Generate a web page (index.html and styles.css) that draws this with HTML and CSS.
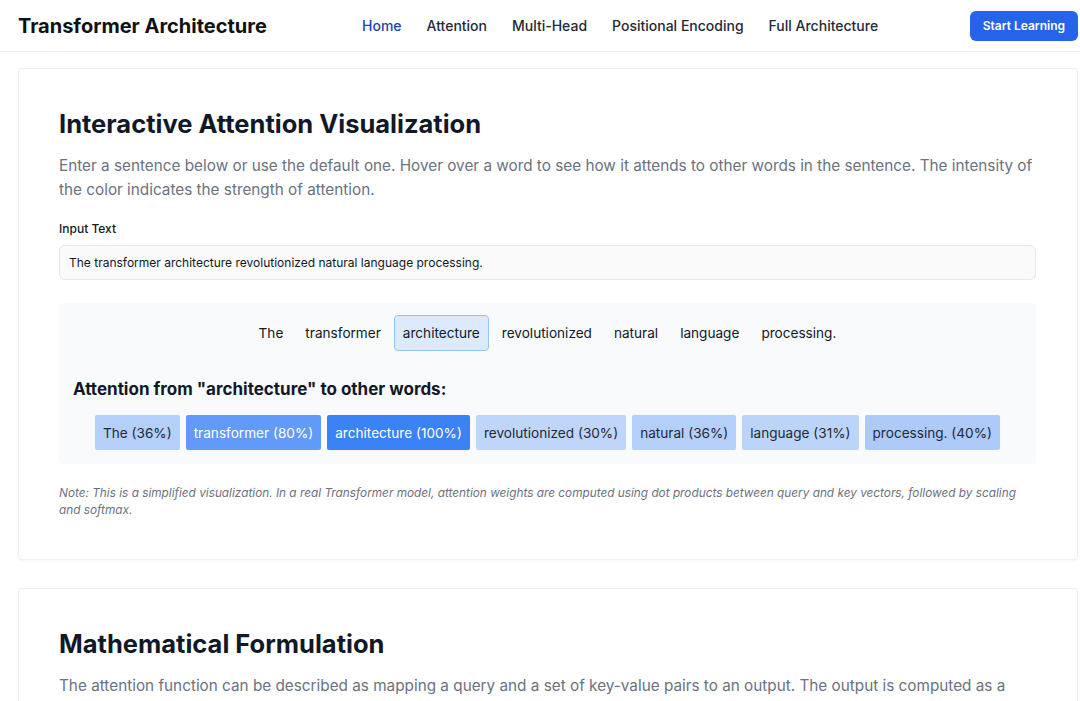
FILE: index.html
```html
<!DOCTYPE html>
<html lang="en">
<head>
    <meta charset="UTF-8">
    <meta name="viewport" content="width=device-width, initial-scale=1.0">
    <title>Transformer Architecture</title>
    <link rel="stylesheet" href="styles.css">
</head>
<body>
    <header class="site-header">
        <div class="brand">Transformer Architecture</div>
        <nav class="nav">
            <a href="#" class="active">Home</a>
            <a href="#">Attention</a>
            <a href="#">Multi-Head</a>
            <a href="#">Positional Encoding</a>
            <a href="#">Full Architecture</a>
        </nav>
        <button class="cta">Start Learning</button>
    </header>

    <main class="page">
        <section class="card">
            <h2>Interactive Attention Visualization</h2>
            <p class="lead">Enter a sentence below or use the default one. Hover over a word to see how it attends to other words in the sentence. The intensity of the color indicates the strength of attention.</p>

            <label for="sentence" class="field-label">Input Text</label>
            <input type="text" id="sentence" class="text-input" value="The transformer architecture revolutionized natural language processing.">

            <div class="viz">
                <div class="words">
                    <span class="word">The</span>
                    <span class="word">transformer</span>
                    <span class="word selected">architecture</span>
                    <span class="word">revolutionized</span>
                    <span class="word">natural</span>
                    <span class="word">language</span>
                    <span class="word">processing.</span>
                </div>
                <h3>Attention from "architecture" to other words:</h3>
                <div class="weights">
                    <span class="weight" style="background: rgba(59, 130, 246, 0.36)">The (36%)</span>
                    <span class="weight light" style="background: rgba(59, 130, 246, 0.8)">transformer (80%)</span>
                    <span class="weight light" style="background: rgba(59, 130, 246, 1)">architecture (100%)</span>
                    <span class="weight" style="background: rgba(59, 130, 246, 0.3)">revolutionized (30%)</span>
                    <span class="weight" style="background: rgba(59, 130, 246, 0.36)">natural (36%)</span>
                    <span class="weight" style="background: rgba(59, 130, 246, 0.31)">language (31%)</span>
                    <span class="weight" style="background: rgba(59, 130, 246, 0.4)">processing. (40%)</span>
                </div>
            </div>

            <p class="note">Note: This is a simplified visualization. In a real Transformer model, attention weights are computed using dot products between query and key vectors, followed by scaling and softmax.</p>
        </section>

        <section class="card">
            <h2>Mathematical Formulation</h2>
            <p class="lead">The attention function can be described as mapping a query and a set of key-value pairs to an output. The output is computed as a weighted sum of the values, where the weight assigned to each value is computed by a compatibility function of the query with the corresponding key.</p>
        </section>
    </main>
</body>
</html>
```

FILE: styles.css
```css
body {
    font-family: Inter, "Noto Sans", sans-serif;
    background-color: #ffffff;
    color: #111827;
    margin: 0;
    padding: 0;
}
.site-header {
    display: flex;
    align-items: center;
    height: 52px;
    padding: 0 2px 0 18px;
    border-bottom: 1px solid #f0f0f0;
    box-sizing: border-box;
}
.brand {
    font-size: 20px;
    font-weight: 700;
    color: #111111;
    width: 344px;
}
.nav {
    display: flex;
    gap: 25px;
    flex: 1;
}
.nav a {
    font-size: 14px;
    font-weight: 500;
    color: #1f2937;
    text-decoration: none;
}
.nav a.active {
    color: #1e40af;
}
.cta {
    background-color: #2563eb;
    color: white;
    border: none;
    border-radius: 6px;
    font-family: inherit;
    font-size: 12px;
    font-weight: 600;
    padding: 0 13px;
    height: 30px;
    cursor: pointer;
}
.page {
    padding: 16px 2px 0 18px;
    display: flex;
    flex-direction: column;
    gap: 28px;
}
.card {
    background: white;
    border: 1px solid #efefef;
    border-radius: 4px;
    box-shadow: 0 1px 3px rgba(0, 0, 0, 0.04);
    padding: 39px 41px 40px 40px;
}
.card h2 {
    font-size: 25.5px;
    line-height: 32px;
    font-weight: 700;
    margin: 0 0 14px;
    color: #111827;
}
.lead {
    font-size: 15.3px;
    line-height: 24px;
    color: #6b7280;
    margin: 0 0 19px;
}
.field-label {
    display: block;
    font-size: 12px;
    line-height: 16px;
    font-weight: 500;
    color: #111827;
    margin-bottom: 8px;
}
.text-input {
    display: block;
    width: 100%;
    box-sizing: border-box;
    height: 35px;
    padding: 0 9px;
    font-family: inherit;
    font-size: 12px;
    color: #111827;
    background: #fafafa;
    border: 1px solid #e5e7eb;
    border-radius: 6px;
}
.viz {
    margin-top: 23px;
    background: #f8fafc;
    border-radius: 4px;
    padding: 12px 14px 14px;
}
.words {
    display: flex;
    justify-content: center;
    gap: 4px;
}
.word {
    font-size: 13.6px;
    line-height: 18px;
    padding: 8px 8px;
    border: 1px solid transparent;
    border-radius: 4px;
}
.word.selected {
    background: #dbeafe;
    border-color: #93c5fd;
}
.viz h3 {
    font-size: 17px;
    font-weight: 700;
    margin: 27px 0 15px;
    line-height: 22px;
}
.weights {
    display: flex;
    justify-content: center;
    gap: 6px;
}
.weight {
    font-size: 13.6px;
    line-height: 20px;
    padding: 8px 8px 7px;
    border-radius: 2px;
    color: #1f2937;
}
.weight.light {
    color: white;
}
.note {
    font-size: 11.8px;
    line-height: 17px;
    font-style: italic;
    color: #6b7280;
    margin: 21px 0 0;
}
```
